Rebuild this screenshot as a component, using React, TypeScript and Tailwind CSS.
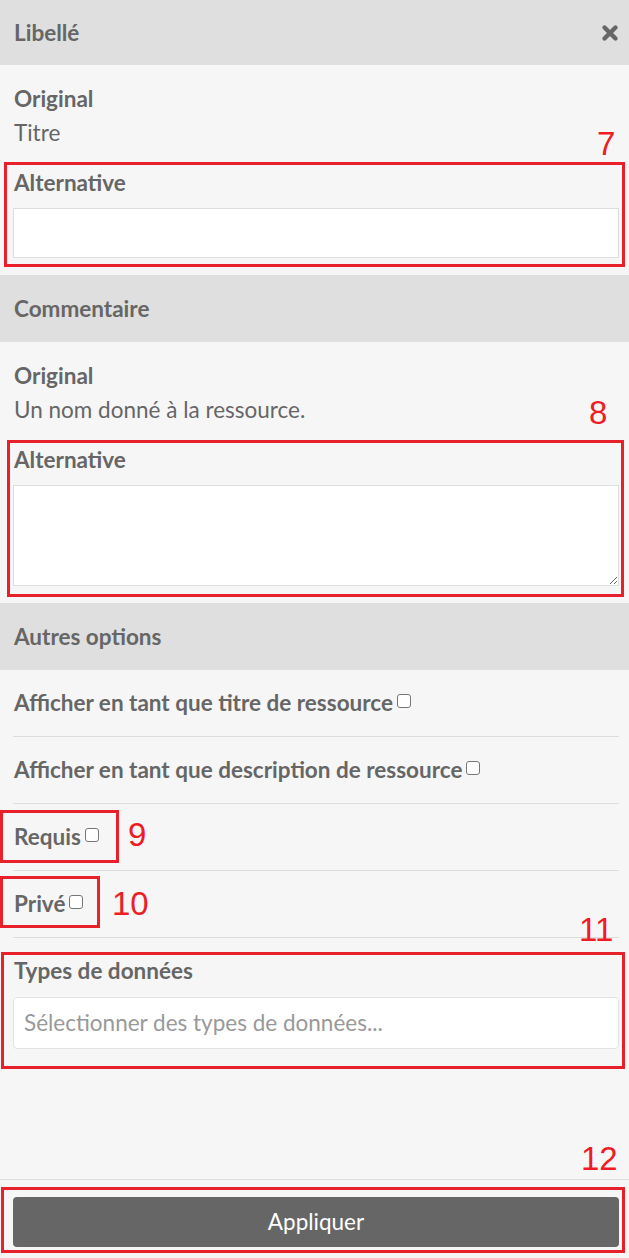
import React from "react";

const font = { fontFamily: "Lato, 'Open Sans', sans-serif" };

function Header({ title }: { title: string }) {
  return (
    <div className="flex items-center bg-[#dfdfdf] px-[14px] h-[67px]">
      <span className="text-[22.5px] font-bold text-[#666]">{title}</span>
    </div>
  );
}

function Check() {
  return (
    <span className="ml-[4px] mb-[4px] inline-block w-[14px] h-[14px] shrink-0 rounded-[3px] border border-[#767676] bg-white" />
  );
}

function Box({ l, t, w, h }: { l: number; t: number; w: number; h: number }) {
  return (
    <div
      className="absolute border-[3px] border-[#e8202a] pointer-events-none"
      style={{ left: l, top: t, width: w, height: h }}
    />
  );
}

function Num({ n, l, t }: { n: string; l: number; t: number }) {
  return (
    <div
      className="absolute text-[33px] leading-none text-[#ee1c25]"
      style={{ left: l, top: t, fontFamily: "'Liberation Sans', Arial, sans-serif" }}
    >
      {n}
    </div>
  );
}

export default function App() {
  return (
    <div className="relative w-[629px] h-[1258px] bg-[#f6f6f6] text-[#666] flex flex-col overflow-hidden" style={font}>
      <div className="h-[65px] flex items-center justify-between bg-[#dfdfdf] pl-[14px] pr-[10px]">
        <span className="text-[22.5px] font-bold text-[#666]">Libellé</span>
        <svg width="18" height="18" viewBox="0 0 18 18">
          <path d="M3.5 3.5 L14.5 14.5 M14.5 3.5 L3.5 14.5" stroke="#666" strokeWidth="4.4" strokeLinecap="round" />
        </svg>
      </div>
      <div className="pl-[13px] pr-[10px] pt-[22px] pb-[17px]">
        <div className="px-[1px] text-[22.5px] leading-[24px] font-bold">Original</div>
        <div className="px-[1px] mt-[10px] text-[22.5px] leading-[24px]">Titre</div>
        <div className="px-[1px] mt-[26px] text-[22.5px] leading-[24px] font-bold">Alternative</div>
        <input className="mt-[13px] block w-full h-[50px] bg-white border border-[#ddd] outline-none" />
      </div>

      <Header title="Commentaire" />
      <div className="pl-[13px] pr-[10px] pt-[22px] pb-[17px]">
        <div className="px-[1px] text-[22.5px] leading-[24px] font-bold">Original</div>
        <div className="px-[1px] mt-[10px] text-[22.5px] leading-[24px]">Un nom donné à la ressource.</div>
        <div className="px-[1px] mt-[26px] text-[22.5px] leading-[24px] font-bold">Alternative</div>
        <textarea className="mt-[13px] block w-full h-[101px] bg-white border border-[#ddd] outline-none resize-y" />
      </div>

      <Header title="Autres options" />
      <div className="pl-[13px] pr-[10px]">
        {[
          "Afficher en tant que titre de ressource",
          "Afficher en tant que description de ressource",
          "Requis",
          "Privé",
        ].map((t) => (
          <div key={t} className="h-[67px] flex items-center border-b border-[#ddd] px-[1px]">
            <span className="text-[22.5px] font-bold">{t}</span>
            <Check />
          </div>
        ))}
        <div className="px-[1px] mt-[21px] text-[22.5px] leading-[24px] font-bold">Types de données</div>
        <div className="mt-[14px] h-[52px] bg-white border border-[#e3e3e3] rounded-[4px] flex items-center px-[10px] text-[22.5px] text-[#999]">
          Sélectionner des types de données...
        </div>
      </div>

      <div className="flex-1" />
      <div className="border-t border-[#ddd] pl-[13px] pr-[10px] pt-[17px] pb-[11px]">
        <button className="w-full h-[50px] rounded-[4px] bg-[#666] text-white text-[22.5px]" style={font}>
          Appliquer
        </button>
      </div>

      <Box l={4} t={162} w={621} h={105} />
      <Box l={7} t={440} w={617} h={157} />
      <Box l={0} t={810} w={119} h={53} />
      <Box l={0} t={876} w={100} h={52} />
      <Box l={1} t={952} w={624} h={117} />
      <Box l={1} t={1187} w={624} h={66} />
      <Num n="7" l={597} t={127} />
      <Num n="8" l={589} t={396} />
      <Num n="9" l={128} t={818} />
      <Num n="10" l={112} t={887} />
      <Num n="11" l={579} t={913} />
      <Num n="12" l={581} t={1142} />
    </div>
  );
}
